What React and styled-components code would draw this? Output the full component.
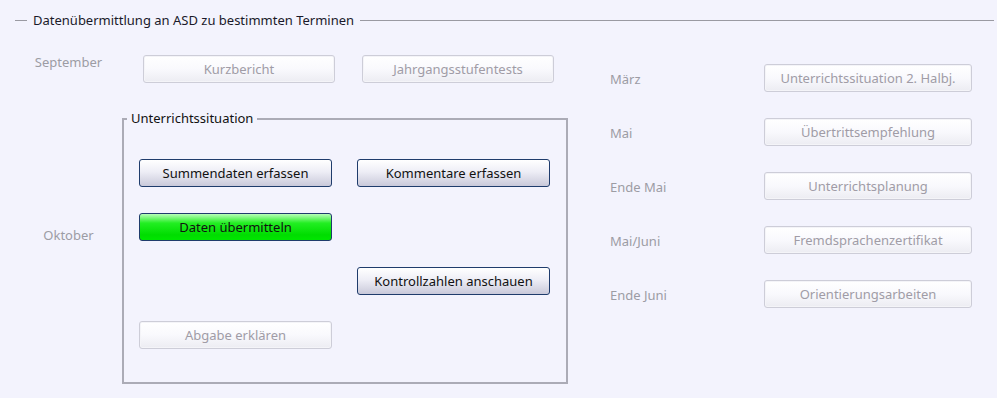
import React from 'react';
import styled, { createGlobalStyle } from 'styled-components';

const GlobalStyle = createGlobalStyle`
  html, body {
    margin: 0;
    padding: 0;
    background: #f3f3fd;
  }
  body {
    font-family: "Noto Sans", "Open Sans", sans-serif;
    font-size: 13px;
    color: #1a1a2a;
  }
`;

const Page = styled.div`
  width: 997px;
  height: 398px;
  overflow: hidden;
`;

const Header = styled.div`
  display: flex;
  align-items: center;
  height: 18px;
  margin-top: 11px;
  padding: 0 3px 0 15px;
`;

const HeaderLine = styled.div`
  height: 1px;
  background: #9a9aa2;
  width: ${p => (p.grow ? 'auto' : '12px')};
  flex: ${p => (p.grow ? 1 : 'none')};
`;

const HeaderTitle = styled.span`
  padding: 0 6px;
  white-space: nowrap;
`;

const Body = styled.div`
  display: flex;
  gap: 43px;
`;

const LeftColumn = styled.div`
  display: grid;
  grid-template-columns: 107px 445px;
  padding-left: 15px;
  padding-top: 26px;
  row-gap: 27px;
  align-items: start;
`;

const MonthLabel = styled.div`
  color: #9c9ca4;
  line-height: 17px;
  text-align: ${p => (p.center ? 'center' : 'left')};
  margin-top: ${p => p.offset || 0}px;
`;

const ButtonRow = styled.div`
  display: flex;
  gap: 27px;
  padding-left: 21px;
`;

const Button = styled.button`
  font-family: inherit;
  font-size: 13px;
  width: ${p => p.width || 193}px;
  height: 28px;
  padding: 0;
  border-radius: 3px;
  grid-column: ${p => p.col || 'auto'};
  border: 1px solid ${p => (p.disabled ? '#cdcdd8' : '#1f3c6c')};
  color: ${p => (p.disabled ? '#a09ca6' : '#111')};
  background: ${p =>
    p.disabled
      ? 'linear-gradient(#ffffff, #f9f9fd 50%, #ececf2)'
      : p.primary
      ? 'linear-gradient(#b8ffb8, #22ee22 35%, #00dd00 80%, #00e600)'
      : 'linear-gradient(#ffffff, #eeeef6 45%, #c9c9da)'};
  box-shadow: ${p => (p.disabled ? 'inset 0 0 0 1px #f4f4f8' : 'none')};
  cursor: ${p => (p.disabled ? 'default' : 'pointer')};
`;

const GroupBox = styled.fieldset`
  margin: 0;
  width: 445px;
  box-sizing: border-box;
  height: 274px;
  border: 2px solid #ababb6;
  padding: 32px 15px 29px 15px;
`;

const GroupLegend = styled.legend`
  padding: 0 4px;
  margin-left: -12px;
  line-height: 17px;
  color: #111;
`;

const GroupGrid = styled.div`
  display: grid;
  grid-template-columns: 193px 194px;
  grid-auto-rows: 28px;
  column-gap: 25px;
  row-gap: 26px;
`;

const Spacer = styled.div``;

const RightColumn = styled.div`
  display: flex;
  flex-direction: column;
  gap: 26px;
  padding-top: 35px;
`;

const RightRow = styled.div`
  display: grid;
  grid-template-columns: 154px 208px;
  align-items: center;
`;

const schedule = [
  ['März', 'Unterrichtssituation 2. Halbj.'],
  ['Mai', 'Übertrittsempfehlung'],
  ['Ende Mai', 'Unterrichtsplanung'],
  ['Mai/Juni', 'Fremdsprachenzertifikat'],
  ['Ende Juni', 'Orientierungsarbeiten'],
];

const App = () => (
  <Page>
    <GlobalStyle />
    <Header>
      <HeaderLine />
      <HeaderTitle>Datenübermittlung an ASD zu bestimmten Terminen</HeaderTitle>
      <HeaderLine grow />
    </Header>
    <Body>
      <LeftColumn>
        <MonthLabel center offset={-1}>September</MonthLabel>
        <ButtonRow>
          <Button disabled width={192}>Kurzbericht</Button>
          <Button disabled width={192}>Jahrgangsstufentests</Button>
        </ButtonRow>

        <MonthLabel center offset={117}>Oktober</MonthLabel>
        <GroupBox>
          <GroupLegend>Unterrichtssituation</GroupLegend>
          <GroupGrid>
            <Button>Summendaten erfassen</Button>
            <Button>Kommentare erfassen</Button>
            <Button primary>Daten übermitteln</Button>
            <Spacer />
            <Button col={2}>Kontrollzahlen anschauen</Button>
            <Button disabled>Abgabe erklären</Button>
          </GroupGrid>
        </GroupBox>
      </LeftColumn>

      <RightColumn>
        {schedule.map(([month, label]) => (
          <RightRow key={month}>
            <MonthLabel offset={3}>{month}</MonthLabel>
            <Button disabled width={208}>{label}</Button>
          </RightRow>
        ))}
      </RightColumn>
    </Body>
  </Page>
);

export default App;
